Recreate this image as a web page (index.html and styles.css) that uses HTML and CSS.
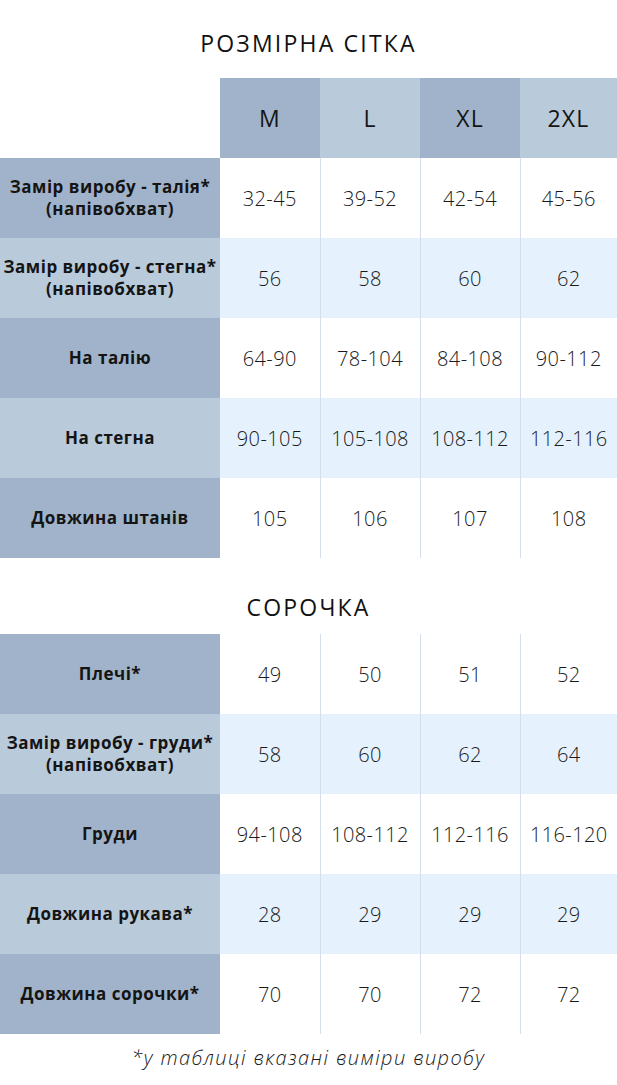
FILE: index.html
```html
<!DOCTYPE html>
<html lang="uk">
<head>
<meta charset="utf-8">
<title>Розмірна сітка</title>
<link rel="stylesheet" href="styles.css">
</head>
<body>
<div class="page">
  <h1 class="title first">РОЗМІРНА СІТКА</h1>
  <table class="grid">
    <colgroup><col class="c-label"><col class="c-size"><col class="c-size"><col class="c-size"><col class="c-last"></colgroup>
    <thead>
      <tr class="head">
        <th class="blank"></th>
        <th class="dark">M</th>
        <th class="light">L</th>
        <th class="dark">XL</th>
        <th class="light">2XL</th>
      </tr>
    </thead>
    <tbody>
      <tr class="odd"><th>Замір виробу - талія*<br>(напівобхват)</th><td>32-45</td><td>39-52</td><td>42-54</td><td>45-56</td></tr>
      <tr class="even"><th>Замір виробу - стегна*<br>(напівобхват)</th><td>56</td><td>58</td><td>60</td><td>62</td></tr>
      <tr class="odd"><th>На талію</th><td>64-90</td><td>78-104</td><td>84-108</td><td>90-112</td></tr>
      <tr class="even"><th>На стегна</th><td>90-105</td><td>105-108</td><td>108-112</td><td>112-116</td></tr>
      <tr class="odd"><th>Довжина штанів</th><td>105</td><td>106</td><td>107</td><td>108</td></tr>
    </tbody>
  </table>

  <h2 class="title second">СОРОЧКА</h2>
  <table class="grid">
    <colgroup><col class="c-label"><col class="c-size"><col class="c-size"><col class="c-size"><col class="c-last"></colgroup>
    <tbody>
      <tr class="odd"><th>Плечі*</th><td>49</td><td>50</td><td>51</td><td>52</td></tr>
      <tr class="even"><th>Замір виробу - груди*<br>(напівобхват)</th><td>58</td><td>60</td><td>62</td><td>64</td></tr>
      <tr class="odd"><th>Груди</th><td>94-108</td><td>108-112</td><td>112-116</td><td>116-120</td></tr>
      <tr class="even"><th>Довжина рукава*</th><td>28</td><td>29</td><td>29</td><td>29</td></tr>
      <tr class="odd"><th>Довжина сорочки*</th><td>70</td><td>70</td><td>72</td><td>72</td></tr>
    </tbody>
  </table>

  <p class="note">*у таблиці вказані виміри виробу</p>
</div>
</body>
</html>
```

FILE: styles.css
```css
html, body {
  margin: 0;
  padding: 0;
  background: #ffffff;
}

.page {
  width: 617px;
  font-family: "Open Sans", "Noto Sans", sans-serif;
  color: #161616;
}

.title {
  margin: 0;
  text-align: center;
  font-weight: 400;
  font-size: 23px;
  line-height: 30px;
  letter-spacing: 2.2px;
  color: #111111;
}

.title.first {
  padding: 28px 0 20px;
}

.title.second {
  padding: 34px 0 12px;
}

.grid {
  width: 617px;
  border-collapse: collapse;
  table-layout: fixed;
}

.c-label { width: 220px; }
.c-size { width: 100px; }
.c-last { width: 97px; }

.grid tr {
  height: 80px;
}

.grid th,
.grid td {
  padding: 0;
  text-align: center;
  vertical-align: middle;
}

.head th {
  font-weight: 400;
  font-size: 23px;
  letter-spacing: 1.2px;
  color: #151515;
}

.head .blank { background: #ffffff; }
.head .dark { background: #a1b3ca; }
.head .light { background: #b9cadb; }

.grid tbody th {
  font-weight: 700;
  font-size: 17px;
  line-height: 22px;
  letter-spacing: 0.5px;
  color: #141414;
  white-space: nowrap;
}

.grid tbody td {
  font-weight: 300;
  font-size: 20px;
  letter-spacing: 0.4px;
  color: #1a1a1a;
  border-left: 1px solid #d4dfeb;
}

.grid tbody td:first-of-type {
  border-left: none;
}

.odd th { background: #a1b3ca; }
.even th { background: #b9cadb; }
.odd td { background: #ffffff; }
.even td { background: #e5f2fd; }

.note {
  margin: 0;
  padding: 10px 0 0;
  line-height: 28px;
  text-align: center;
  font-style: italic;
  font-weight: 300;
  font-size: 20px;
  letter-spacing: 1.4px;
  color: #1a1a1a;
}
```
